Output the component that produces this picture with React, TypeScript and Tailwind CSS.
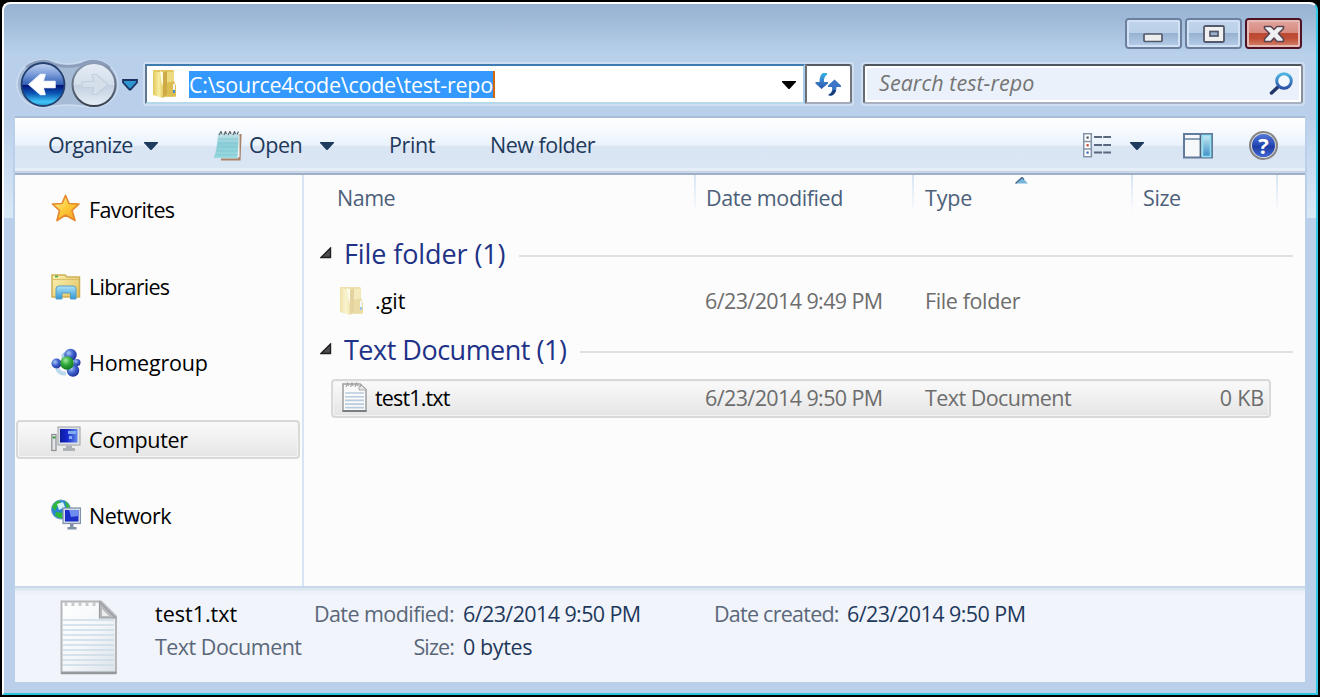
import type { ReactNode } from "react";

function NavButtons() {
  return (
    <svg width="104" height="50" viewBox="16 59 104 50">
      <defs>
        <linearGradient id="navTop" x1="0" y1="0" x2="0" y2="1">
          <stop offset="0" stopColor="#c3d3ee" />
          <stop offset="0.25" stopColor="#7f9fdb" />
          <stop offset="0.5" stopColor="#3060b4" />
          <stop offset="0.52" stopColor="#02127a" />
          <stop offset="0.72" stopColor="#0d5cb8" />
          <stop offset="0.9" stopColor="#3fc4f6" />
          <stop offset="1" stopColor="#2b9fd8" />
        </linearGradient>
        <linearGradient id="navOff" x1="0" y1="0" x2="0" y2="1">
          <stop offset="0" stopColor="#e6edf6" />
          <stop offset="0.5" stopColor="#d3deea" />
          <stop offset="0.52" stopColor="#c3d0e0" />
          <stop offset="1" stopColor="#e6eef7" />
        </linearGradient>
        <linearGradient id="navRim" x1="0" y1="0" x2="0" y2="1">
          <stop offset="0" stopColor="#8c9cb5" />
          <stop offset="1" stopColor="#39414f" />
        </linearGradient>
      </defs>
      <path
        d="M42 60 C54 60 58 64 68 64 C79 64 82 60 94 60 C108 60 118 71 118 84 C118 97 108 107 94 107 C84 107 79 105 68 105 C58 105 52 107 42 107 C28 107 17 97 17 84 C17 71 28 60 42 60Z"
        fill="#a6bbd5"
        stroke="#cbdcf0"
        strokeWidth="1.5"
      />
      <path d="M26 67 Q42 56 56 65 Q68 68 80 65 Q96 56 110 68" fill="none" stroke="#8b9dba" strokeWidth="2.5" />
      <circle cx="43" cy="84.500" r="21.500" fill="url(#navTop)" stroke="#24406f" strokeWidth="1.8" />
      <path
        d="M29 84.500 L40.500 74.500 L45 74.500 L43 81.500 H55 V87.500 H43 L45 94.500 H40.500Z"
        fill="#fff"
        stroke="#f2f5fd"
        strokeWidth="1.500"
        strokeLinejoin="round"
      />
      <circle cx="94" cy="84.500" r="21.500" fill="url(#navOff)" stroke="url(#navRim)" strokeWidth="2" />
      <path
        d="M108 84.500 L96.500 74.500 L92 74.500 L94 81.500 H82 V87.500 H94 L92 94.500 H96.500Z"
        fill="#d5dfea"
        stroke="#c3cfde"
        strokeWidth="1.200"
        strokeLinejoin="round"
      />
    </svg>
  );
}

function HistoryArrow() {
  return (
    <svg width="18" height="14" viewBox="0 0 18 14">
      <path d="M2 2 H16 V4.500 L9.500 11.500 H8.500 L2 4.500Z" fill="#2f95d0" stroke="#1b3262" strokeWidth="1.800" />
    </svg>
  );
}

function Caret({ black = false }: { black?: boolean }) {
  return (
    <svg width="14" height="8" viewBox="0 0 14 8">
      <path d="M0 0 H14 V1 L7.500 8 H6.500 L0 1Z" fill={black ? "#000" : "#1e3a5f"} />
    </svg>
  );
}

function FolderIcon({ pale = false }: { pale?: boolean }) {
  return (
    <svg width="25" height="30" viewBox="0 0 25 30" opacity={pale ? 0.5 : 1}>
      <defs>
        <linearGradient id="folderFront" x1="0" y1="0" x2="1" y2="0">
          <stop offset="0" stopColor="#e3c75a" />
          <stop offset="0.6" stopColor="#f8eea4" />
          <stop offset="1" stopColor="#e5cc62" />
        </linearGradient>
      </defs>
      <path d="M1 1.500 Q1 1 2 1 H20.500 Q22 1 22 2.500 V15 L24 17 V26 Q24 28 22 28 H12 L1 25Z" fill="#e2c75e" />
      <path d="M13 3 H22 V15 L24 17 V26 Q24 28 22 28 H11Z" fill="#edda80" />
      <path d="M14 14 L22 12 L24 17 V26 Q24 27.500 22 27.500 H12Z" fill="#dcbd52" />
      <path d="M1 2 L11 4 V29 L1 26Z" fill="url(#folderFront)" />
      <path d="M11 4 L15 2 V25 L11 29Z" fill="#cdaa45" />
      <path d="M8 2 L11 3.500 V14 L10 17Z" fill="#fffce4" />
      <rect x="21" y="15" width="2" height="9" fill="#eef4f7" />
      <rect x="21" y="21" width="2" height="3" fill="#3b8fd4" />
    </svg>
  );
}

function RefreshIcon() {
  return (
    <svg width="26" height="24" viewBox="0 0 26 24" className="mr-px">
      <defs>
        <linearGradient id="refreshBlue" x1="0" y1="0" x2="0" y2="1">
          <stop offset="0" stopColor="#2fb4e4" />
          <stop offset="0.5" stopColor="#3b7fcb" />
          <stop offset="1" stopColor="#2b57a8" />
        </linearGradient>
      </defs>
      <path d="M12 1 H8 Q4.500 3 4.500 10 H0.500 V11.500 L6.500 17 L13 11.500 V10 H9 Q8.500 5 12 2.500Z" fill="url(#refreshBlue)" />
      <path d="M14 23.500 H17 Q21.500 21 21.500 15 H26 V13.500 L19.500 7.500 L13 13.500 V15 H17 Q18 20 14 22.500Z" fill="#3a76c6" />
      <path d="M13.500 23.500 H17 Q20.500 21.500 21 18 H18 Q17 21.500 13.500 22.500Z" fill="#173b78" />
    </svg>
  );
}

function SearchIcon() {
  return (
    <svg width="25" height="24" viewBox="0 0 25 24">
      <defs>
        <linearGradient id="lens" x1="0" y1="0" x2="0" y2="1">
          <stop offset="0" stopColor="#4eb4e0" />
          <stop offset="1" stopColor="#2b50a8" />
        </linearGradient>
      </defs>
      <path d="M2.500 21 L10 14" stroke="#23376a" strokeWidth="3.500" strokeLinecap="round" />
      <circle cx="15" cy="9" r="7.300" fill="#f1f7fd" stroke="url(#lens)" strokeWidth="3" />
    </svg>
  );
}

function NotepadIcon() {
  return (
    <svg width="29" height="30" viewBox="0 0 29 30">
      <defs>
        <linearGradient id="notepad" x1="0" y1="0" x2="0" y2="1">
          <stop offset="0" stopColor="#c8e3ea" />
          <stop offset="0.45" stopColor="#8ccfd8" />
          <stop offset="1" stopColor="#9adbe0" />
        </linearGradient>
      </defs>
      <path d="M8 28.500 H26.500 L27.500 3" fill="none" stroke="#a9826a" strokeWidth="2.200" />
      <path d="M26.500 3 V26 H23Z" fill="#f4f6f4" />
      <path d="M5 2.500 H26 L24.500 27 H0.500 Q4 20 5 2.500Z" fill="url(#notepad)" />
      <path d="M5 8 H25 M4.500 12 H25 M4 16 H25 M3.500 20 H24.500 M2 24 H24.500" stroke="#7fc3ce" strokeWidth="0.800" />
      <path d="M6 4 L8 0.500 L9 3 M11 4 L12.500 0.500 L13.500 3 M15 4 L17 0.500 L18 3 M20 4 L21.500 0.500 L22.500 3 M24 3.500 L25.500 0.500" fill="none" stroke="#5b6469" strokeWidth="1.200" />
    </svg>
  );
}

function ViewIcon() {
  return (
    <svg width="29" height="25" viewBox="0 0 29 25">
      <path d="M0.700 0.700 H8.300 V23.800 H0.700Z M0.700 8.500 H8.300 M0.700 16 H8.300" fill="#fff" stroke="#8494a8" strokeWidth="1.600" />
      <rect x="3.500" y="3.500" width="2.200" height="2.200" fill="#444e5e" />
      <rect x="3.500" y="11.200" width="2.200" height="2.200" fill="#c04030" />
      <rect x="3.500" y="18.500" width="2.200" height="2.200" fill="#2f66c0" />
      <path d="M11 4 H19 M20.200 4 H28 M11 12 H19 M20.200 12 H28 M11 19.500 H19 M20.200 19.500 H28" stroke="#5a687d" strokeWidth="2" />
    </svg>
  );
}

function PreviewPaneIcon() {
  return (
    <svg width="30" height="26" viewBox="0 0 30 26">
      <defs>
        <linearGradient id="paneGlass" x1="0" y1="0" x2="0" y2="1">
          <stop offset="0" stopColor="#c4e8f4" />
          <stop offset="1" stopColor="#3f8fc8" />
        </linearGradient>
      </defs>
      <rect x="1" y="1" width="28" height="23.500" fill="#f6f8fa" stroke="#607b9b" strokeWidth="2" />
      <path d="M2 6 H18" stroke="#7e95b0" strokeWidth="1.800" />
      <path d="M17.500 2 V24" stroke="#47617f" strokeWidth="1.800" />
      <rect x="19.500" y="2.500" width="8" height="21" fill="url(#paneGlass)" stroke="#8fe2f2" strokeWidth="1.600" />
    </svg>
  );
}

function HelpIcon() {
  return (
    <span className="flex size-[29px] items-center justify-center rounded-full border-[2.5px] border-[#858585] bg-[#d9d9d9] p-px">
      <span className="flex size-full items-center justify-center rounded-full bg-[linear-gradient(#5478d6,#2546b4_50%,#1b3aa0_52%,#4167d4)] pb-[2px] text-[22px] leading-none font-bold text-white">
        ?
      </span>
    </span>
  );
}

function StarIcon() {
  return (
    <svg width="30" height="30" viewBox="0 0 30 30" className="-mt-[3px]">
      <defs>
        <linearGradient id="starGold" x1="0" y1="0" x2="1" y2="1">
          <stop offset="0" stopColor="#fdf6b0" />
          <stop offset="0.5" stopColor="#fcca38" />
          <stop offset="1" stopColor="#f09a20" />
        </linearGradient>
      </defs>
      <path
        d="M14.500 2.500 L18 10.500 L28 11 L21 17.500 L24 27.500 L14.500 22 L6 27.500 L8.500 17.500 L1.500 11 L11 10.500Z"
        fill="url(#starGold)"
        stroke="#e58a2c"
        strokeWidth="1.700"
        strokeLinejoin="round"
      />
    </svg>
  );
}

function LibraryIcon() {
  return (
    <svg width="30" height="26" viewBox="0 0 30 26" className="mt-[2px]">
      <defs>
        <linearGradient id="libFolder" x1="0" y1="0" x2="1" y2="1">
          <stop offset="0" stopColor="#fdf5b8" />
          <stop offset="1" stopColor="#dfbd5b" />
        </linearGradient>
        <linearGradient id="libBlue" x1="0" y1="0" x2="0" y2="1">
          <stop offset="0" stopColor="#aee4f6" />
          <stop offset="1" stopColor="#2f95d8" />
        </linearGradient>
      </defs>
      <path d="M1 1 H14 L16 3 H28.500 V23 H1Z" fill="url(#libFolder)" stroke="#cdb056" strokeWidth="1.500" />
      <path d="M1.500 5.500 H28" stroke="#d9bf6a" strokeWidth="1.200" />
      <path d="M4 2.500 H7" stroke="#3aa845" strokeWidth="1.500" />
      <path d="M5 25 V15 Q5 12 8 12 H22 Q25 12 25 15 V25 H19.500 V19 H11 V25Z" fill="url(#libBlue)" stroke="#5aa0c4" strokeWidth="1" />
    </svg>
  );
}

function HomegroupIcon() {
  return (
    <svg width="30" height="30" viewBox="0 0 30 30">
      <defs>
        <radialGradient id="ballBlue" cx="0.350" cy="0.350" r="0.700">
          <stop offset="0" stopColor="#a8c8f4" />
          <stop offset="0.5" stopColor="#4163cc" />
          <stop offset="1" stopColor="#1c2e9c" />
        </radialGradient>
        <radialGradient id="ballGreen" cx="0.400" cy="0.300" r="0.700">
          <stop offset="0" stopColor="#a4eaa0" />
          <stop offset="0.5" stopColor="#2fa83a" />
          <stop offset="1" stopColor="#107a1c" />
        </radialGradient>
      </defs>
      <path d="M6 20 Q8 26 15 25.500" fill="none" stroke="#bdd9ee" strokeWidth="4" />
      <circle cx="14" cy="8" r="3.500" fill="#a9cdea" />
      <circle cx="19.500" cy="7" r="6.200" fill="url(#ballBlue)" />
      <circle cx="5.500" cy="15.500" r="5" fill="url(#ballBlue)" />
      <circle cx="26" cy="14.500" r="3.500" fill="url(#ballBlue)" />
      <circle cx="22" cy="22.500" r="6.200" fill="url(#ballBlue)" />
      <circle cx="16" cy="15" r="6.800" fill="url(#ballGreen)" />
    </svg>
  );
}

function ComputerIcon() {
  return (
    <svg width="30" height="26" viewBox="0 0 30 26">
      <defs>
        <linearGradient id="screenBlue" x1="0" y1="0" x2="1" y2="0">
          <stop offset="0" stopColor="#0c1c9c" />
          <stop offset="0.4" stopColor="#1526cc" />
          <stop offset="1" stopColor="#5f88ea" />
        </linearGradient>
      </defs>
      <rect x="0.800" y="8.500" width="4.200" height="16" fill="#e3e4e6" stroke="#8b8e92" strokeWidth="1.200" />
      <rect x="1.500" y="10.500" width="3" height="2" fill="#35a040" />
      <rect x="7" y="1" width="22" height="18" fill="#dfe1e4" stroke="#a9adb2" strokeWidth="1.200" />
      <rect x="9" y="3" width="17.500" height="13.500" fill="url(#screenBlue)" />
      <path d="M17 5 H25 V8 H17Z M18 10 H21 V13 H18Z" fill="#82aaf0" />
      <path d="M15 19.500 H21 V22 H24 V25 H12 V22 H15Z" fill="#aeb2b7" />
    </svg>
  );
}

function NetworkIcon() {
  return (
    <svg width="30" height="31" viewBox="0 0 30 31" className="-mt-[2px]">
      <circle cx="10" cy="10.500" r="9.500" fill="#2b83d6" stroke="#6ba0cc" strokeWidth="1" />
      <path d="M1 8 Q3 3 8 1.500 L10 4 L6 8 L4 12Z M14 2 Q19 5 19 10 L15 8Z M5 13 L12 14 L11 19.500 Q7 19 4 16.500Z" fill="#2fb83a" />
      <path d="M6 5 L12 3 L14 8 L8 11Z" fill="#d9f5fb" />
      <rect x="12" y="9" width="17.500" height="15.500" fill="#d4dce6" stroke="#7f90a8" strokeWidth="1.200" />
      <rect x="14" y="11" width="13.500" height="11.500" fill="#1c2fc8" />
      <path d="M18 11 H27.500 V17 L20 18Z" fill="#6f8df0" />
      <path d="M19 25 H22.500 V28 H25.500 V30.500 H16.500 V28 H19Z" fill="#7f8fa6" />
    </svg>
  );
}

function TextFileIcon() {
  return (
    <svg width="25" height="30" viewBox="0 0 25 30" className="-mt-[3px] ml-px">
      <path d="M1 2 H18 L24 7.500 V29 H1Z" fill="#fafafa" stroke="#9a9c9e" strokeWidth="1.500" />
      <path d="M17 1.500 V8 H24" fill="#e6e7e8" stroke="#aaa" strokeWidth="1" />
      <path d="M4 5 L5.500 1 L6.500 4 M8.500 5 L10 1 L11 4 M13 5 L14.500 1 L15.500 4 M18 5 L19.500 2" fill="none" stroke="#a5a7aa" strokeWidth="1.200" />
      <path d="M3 11 H22 M3 14.700 H22 M3 18.400 H22 M3 22.100 H22 M3 25.600 H22" stroke="#b9cbde" strokeWidth="1.600" />
      <path d="M0.500 29 H24.500" stroke="#7b7d80" strokeWidth="2" />
    </svg>
  );
}

function LargeTextFileIcon() {
  return (
    <svg width="58" height="75" viewBox="0 0 58 75">
      <defs>
        <linearGradient id="paper" x1="0" y1="0" x2="1" y2="1">
          <stop offset="0" stopColor="#ffffff" />
          <stop offset="0.5" stopColor="#f4f7fa" />
          <stop offset="1" stopColor="#dce3ea" />
        </linearGradient>
      </defs>
      <path d="M1.500 1.500 H41 L56 16.500 V72.500 H1.500Z" fill="url(#paper)" stroke="#b4b6b9" strokeWidth="2" />
      <path
        d="M3 20 H54 M3 25 H54 M3 30 H54 M3 35 H54 M3 40 H54 M3 45 H54 M3 50 H54 M3 55 H54 M3 60 H54 M3 65 H54"
        stroke="#ccdce8"
        strokeWidth="1.500"
      />
      <path d="M39.500 2 L55.500 18 H39.500Z" fill="#b8babd" stroke="#999b9e" strokeWidth="1.200" />
      <path d="M42 9 L49 16 H42Z" fill="#eceded" />
      <path d="M6 2 V6 M13 2 V6 M20 2 V6 M27 2 V6 M34 2 V6" stroke="#c8cacc" strokeWidth="3" />
      <path d="M1 73 H56.500" stroke="#96989b" strokeWidth="2.500" />
    </svg>
  );
}

function Collapse() {
  return (
    <svg width="12" height="12" viewBox="0 0 12 12" className="-mt-[2px]">
      <path d="M10.500 1 V10.500 H1Z" fill="#4b4d50" stroke="#1f2022" strokeWidth="1.400" />
    </svg>
  );
}

function WindowButton({ close = false, children }: { close?: boolean; children: ReactNode }) {
  return (
    <div
      className={
        close
          ? "h-[31px] w-[57px] rounded-[4px] border-2 border-[#4e1222]"
          : "h-[31px] w-[57px] rounded-[4px] border-2 border-[#6b7f9e]"
      }
    >
      <div
        className={
          close
            ? "flex size-full items-center justify-center rounded-[2px] border-2 border-[#e6b9b4] bg-[linear-gradient(#dfa098,#d88a80_48%,#bb4a35_50%,#c04c34_70%,#cf7a62)]"
            : "flex size-full items-center justify-center rounded-[2px] border-2 border-[#d2e2f4] bg-[linear-gradient(#c0d5eb,#bad0e8_48%,#97b2d1_50%,#b2cae6)]"
        }
      >
        {children}
      </div>
    </div>
  );
}

function TitleBar() {
  return (
    <div className="flex h-[56px] shrink-0 justify-end gap-[3px] pt-[14px] pr-[14px]">
      <WindowButton>
        <svg width="20" height="10" viewBox="0 0 20 10" className="mt-[8px] mr-px">
          <rect x="1" y="1" width="18" height="7.500" rx="1" fill="#eceded" stroke="#53586a" strokeWidth="1.700" />
        </svg>
      </WindowButton>
      <WindowButton>
        <svg width="22" height="18" viewBox="0 0 22 18">
          <rect x="1" y="1" width="20" height="16" rx="1.500" fill="#f0f0f1" stroke="#53586a" strokeWidth="1.800" />
          <rect x="7" y="6.500" width="8" height="4.500" fill="#9db4d0" stroke="#53586a" strokeWidth="1.700" />
        </svg>
      </WindowButton>
      <WindowButton close>
        <svg width="22" height="18" viewBox="0 0 22 18">
          <path
            d="M1.500 1.500 H8 L11 4.500 L14 1.500 H20.500 V3.500 L15.500 8.500 L20.500 14 V16.500 H14 L11 13 L8 16.500 H1.500 V14 L6.500 8.500 L1.500 3.500Z"
            fill="#eff0f1"
            stroke="#5a4552"
            strokeWidth="1.600"
            strokeLinejoin="round"
          />
        </svg>
      </WindowButton>
    </div>
  );
}

function NavigationBar() {
  return (
    <div className="flex h-[56px] shrink-0 items-start pl-[12px]">
      <div className="-mt-px flex h-[50px] items-center">
        <NavButtons />
        <div className="ml-px pt-[2px]">
          <HistoryArrow />
        </div>
      </div>
      <div className="mt-[2px] ml-[4px] flex h-[44px] w-[711px] rounded-[3px] border-2 border-[#cfdff1]">
        <div className="flex flex-1 items-center border-2 border-t-[#3d7bb0] border-r-[#a9cbea] border-b-[#b5d9eb] border-l-[#5f7690] bg-white">
          <div className="ml-[5px]">
            <FolderIcon />
          </div>
          <div className="ml-[12px] h-[27px] border-r-2 border-[#d4690c] bg-[#3399ff] text-[21.5px] leading-[27px] tracking-[-0.25px] text-white">
            C:\source4code\code\test-repo
          </div>
          <div className="mr-[7px] ml-auto pt-px">
            <Caret black />
          </div>
        </div>
        <div className="flex w-[47px] items-center justify-center rounded-r-[3px] border-2 border-t-[#555a61] border-r-[#73777d] border-b-[#a3abbb] border-l-[#6a6e75] bg-white">
          <RefreshIcon />
        </div>
      </div>
      <div className="mt-[2px] ml-[7px] h-[44px] w-[444px] rounded-[4px] border-2 border-[#cfdff1]">
        <div className="flex h-full items-center justify-between rounded-[3px] border-2 border-t-[#50565e] border-r-[#8b919b] border-b-[#a8b0c2] border-l-[#656b74] bg-[#eaf1fa] pr-[7px] pl-[14px] inset-ring-2 inset-ring-white">
          <span className="mb-px text-[21.5px] tracking-[0.05px] text-[#757575] italic">Search test-repo</span>
          <SearchIcon />
        </div>
      </div>
    </div>
  );
}

function Toolbar() {
  return (
    <div className="flex h-[59px] shrink-0 items-center border-t-2 border-b-2 border-t-[#a7bcd7] border-b-[#9fafc8] bg-[linear-gradient(#fefeff,#f6faff_25%,#e8f1fb_50%,#dae5f3_51%,#dbe6f4_91%,#e8f0fa_92%,#e4ecf8_96%,#c7d6e6_97%)] pl-[33px] text-[21.5px] text-[#1e395b]">
      <span className="w-[96px] tracking-[-0.64px]">Organize</span>
      <Caret />
      <span className="ml-[55px]">
        <NotepadIcon />
      </span>
      <span className="ml-[7px] w-[71px] tracking-[-0.5px]">Open</span>
      <Caret />
      <span className="ml-[55px] w-[101px] tracking-[-0.4px]">Print</span>
      <span className="w-[120px] tracking-[-0.5px]">New folder</span>
      <span className="mr-[18px] ml-auto">
        <ViewIcon />
      </span>
      <Caret />
      <span className="mr-[36px] ml-[39px]">
        <PreviewPaneIcon />
      </span>
      <span className="mr-[27px]">
        <HelpIcon />
      </span>
    </div>
  );
}

function Place({ icon, active = false, children }: { icon: ReactNode; active?: boolean; children: ReactNode }) {
  return (
    <div
      className={
        active
          ? "flex h-[39px] items-center gap-[8px] rounded-[4px] border-2 border-[#d9d9d9] bg-[linear-gradient(#fafafa,#e5e5e5)] pl-[33px] inset-ring-1 inset-ring-[#f5f5f5]"
          : "flex h-[39px] items-center gap-[8px] pl-[35px]"
      }
    >
      {icon}
      {children}
    </div>
  );
}

function Sidebar() {
  return (
    <div className="flex w-[289px] shrink-0 flex-col gap-[37.6px] border-r-2 border-[#d6e4f5] pt-[15px] pr-[2px] pl-px text-[21.5px] text-black">
      <Place icon={<StarIcon />}>
        <span className="pt-[2px] tracking-[-0.6px]">Favorites</span>
      </Place>
      <Place icon={<LibraryIcon />}>
        <span className="pt-[2px] tracking-[-0.75px]">Libraries</span>
      </Place>
      <Place icon={<HomegroupIcon />}>
        <span className="pt-px tracking-[-0.2px]">Homegroup</span>
      </Place>
      <Place icon={<ComputerIcon />} active>
        <span className="pt-[2px] tracking-[-0.3px]">Computer</span>
      </Place>
      <Place icon={<NetworkIcon />}>
        <span className="tracking-[-0.5px]">Network</span>
      </Place>
    </div>
  );
}

function Divider() {
  return <div className="h-[38px] w-[2px] shrink-0 bg-linear-to-b from-[#d6e5f5] to-[#fcfcfc]" />;
}

function FileList() {
  return (
    <div className="min-w-0 flex-1">
      <div className="relative flex h-[45px] text-[21.5px] leading-[45px] text-[#4c607a]">
        <span className="w-[390px] pl-[33px] tracking-[-0.5px]">Name</span>
        <Divider />
        <span className="w-[216px] pl-[10px] tracking-[-0.4px]">Date modified</span>
        <Divider />
        <span className="w-[217px] pl-[11px] tracking-[-0.2px]">Type</span>
        <Divider />
        <span className="w-[143px] pl-[10px] tracking-[-0.4px]">Size</span>
        <Divider />
        <svg className="absolute top-[2px] left-[711px]" width="14" height="7" viewBox="0 0 14 7">
          <path d="M1 6.500 L7 0.500 L13 6.500Z" fill="#76b4dc" />
          <path d="M0.500 6.500 L7 0.500 L9 2.500" fill="none" stroke="#47698f" strokeWidth="1.400" />
        </svg>
      </div>
      <div className="mt-[15px] flex h-[38px] items-center pl-[16px] text-[27px] text-[#1e3287]">
        <Collapse />
        <span className="ml-[12px] tracking-[-0.1px]">File folder (1)</span>
        <div className="mt-[4px] mr-[12px] ml-[14px] h-[2px] flex-1 bg-[#e0e0e1]" />
      </div>
      <div className="mt-[8px] ml-[27px] flex h-[39px] w-[940px] items-center text-[21.5px] text-[#6d6d6d]">
        <div className="w-[44px] pl-[8px]">
          <FolderIcon pale />
        </div>
        <span className="w-[330px] pt-[2px] text-black">.git</span>
        <span className="w-[220px] pt-[2px] tracking-[-0.6px]">6/23/2014 9:49 PM</span>
        <span className="pt-[2px] tracking-[-0.38px]">File folder</span>
      </div>
      <div className="mt-[11px] flex h-[38px] items-center pl-[16px] text-[27px] text-[#1e3287]">
        <Collapse />
        <span className="ml-[12px] tracking-[-0.5px]">Text Document (1)</span>
        <div className="mt-[4px] mr-[12px] ml-[14px] h-[2px] flex-1 bg-[#e0e0e1]" />
      </div>
      <div className="mt-[10px] ml-[27px] flex h-[39px] w-[940px] items-center rounded-[4px] border-2 border-[#d9d9d9] bg-[linear-gradient(#fafafa,#e5e5e5)] text-[21.5px] text-[#6d6d6d] inset-ring-1 inset-ring-[#f3f3f3]">
        <div className="w-[42px] pl-[8px]">
          <TextFileIcon />
        </div>
        <span className="w-[330px] tracking-[-0.85px] text-black">test1.txt</span>
        <span className="w-[220px] tracking-[-0.6px]">6/23/2014 9:50 PM</span>
        <span className="tracking-[-0.55px]">Text Document</span>
        <span className="mr-[5px] ml-auto tracking-[-0.2px]">0 KB</span>
      </div>
    </div>
  );
}

function DetailsPane() {
  return (
    <div className="flex h-[96px] shrink-0 border-t-2 border-[#c9d8ea] bg-[linear-gradient(#dce6f1_2px,#eaf0f9_3px,#f1f4fb_8px)] pl-[45px] text-[21.5px] leading-[33px] whitespace-nowrap">
      <div className="w-[95px] pt-[12px]">
        <LargeTextFileIcon />
      </div>
      <div className="w-[155px] pt-[9px] text-[#5a6779]">
        <div className="text-black">test1.txt</div>
        <div className="tracking-[-0.52px]">Text Document</div>
      </div>
      <div className="w-[144px] pt-[9px] text-right text-[#5a6779]">
        <div className="tracking-[-0.55px]">Date modified:</div>
        <div className="tracking-[-0.9px]">Size:</div>
      </div>
      <div className="ml-[9px] w-[251px] pt-[9px] text-[#1e395b]">
        <div className="tracking-[-0.6px]">6/23/2014 9:50 PM</div>
        <div className="tracking-[-0.4px]">0 bytes</div>
      </div>
      <div className="w-[133px] pt-[9px] tracking-[-0.75px] text-[#5a6779]">Date created:</div>
      <div className="pt-[9px] tracking-[-0.55px] text-[#1e395b]">6/23/2014 9:50 PM</div>
    </div>
  );
}

export default function App() {
  return (
    <div className="h-[697px] w-[1320px] overflow-hidden bg-black p-[2px] font-['Open_Sans','Noto_Sans',sans-serif] select-none">
      <div className="flex h-[693px] flex-col rounded-t-[8px] border-2 border-t-white border-r-[#35c8e4] border-b-[#2cc3de] border-l-white bg-[linear-gradient(#98b3d1,#9fbad8_15px,#b8d0ea_50px,#bad0ea_70px)]">
        <TitleBar />
        <NavigationBar />
        <div className="flex flex-1">
          <div className="h-[102px] w-[9px] shrink-0 bg-linear-to-b from-[#bad0ea] to-[#d9e8f6]" />
          <div className="mx-[2px] flex w-[1290px] shrink-0 flex-col">
            <Toolbar />
            <div className="flex h-[411px] shrink-0 bg-[#fcfcfc]">
              <Sidebar />
              <FileList />
            </div>
            <DetailsPane />
          </div>
          <div className="h-[102px] w-[9px] shrink-0 bg-linear-to-b from-[#bad0ea] to-[#d9e8f6]" />
        </div>
      </div>
    </div>
  );
}
